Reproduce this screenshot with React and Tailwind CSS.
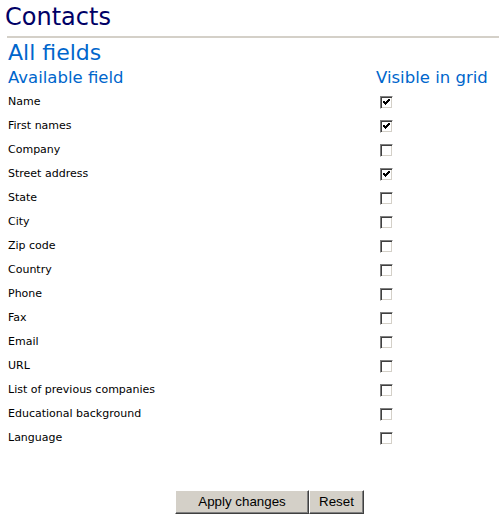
import React from "react";

const fields = [
  ["Name", true],
  ["First names", true],
  ["Company", false],
  ["Street address", true],
  ["State", false],
  ["City", false],
  ["Zip code", false],
  ["Country", false],
  ["Phone", false],
  ["Fax", false],
  ["Email", false],
  ["URL", false],
  ["List of previous companies", false],
  ["Educational background", false],
  ["Language", false],
];

function ClassicCheckbox({ checked }) {
  return (
    <span className="ml-[4px] flex h-[13px] w-[13px] items-center justify-center border border-t-[#808080] border-l-[#808080] border-r-white border-b-white bg-white shadow-[inset_1px_1px_#404040,inset_-1px_-1px_#d4d0c8]">
      {checked && (
        <svg width="9" height="9" viewBox="0 0 9 9">
          <polyline points="1.5,3.5 3.5,5.5 7.5,1.5" fill="none" stroke="#000" strokeWidth="2" shapeRendering="crispEdges" />
        </svg>
      )}
    </span>
  );
}

export default function App() {
  return (
    <div className="min-h-screen bg-white pl-2 font-['DejaVu_Sans',Verdana,sans-serif]">
      {/* Page title */}
      <div className="-ml-[3px] pt-[3px] text-[24px] leading-[28px] text-[#000066]">Contacts</div>
      <div className="-ml-px mt-[5px] h-[2px] bg-[#d4d0c8]" />

      <div className="mt-[2px] text-[22px] leading-[26px] text-[#0066cc]">All fields</div>

      {/* Field table */}
      <div className="mt-[2px] flex text-[16.5px] leading-[20px] text-[#0066cc]">
        <div className="w-[368px]">Available field</div>
        <div>Visible in grid</div>
      </div>
      <div className="mt-[2px]">
        {fields.map(([label, checked]) => (
          <div key={label} className="flex h-6 items-center text-[11px] text-black">
            <div className="w-[368px]">{label}</div>
            <ClassicCheckbox checked={checked} />
          </div>
        ))}
      </div>

      {/* Actions */}
      <div className="ml-[167px] mt-[40px] flex font-['Liberation_Sans',Arial,sans-serif] text-[13.33px] text-black">
        <button className="h-6 w-[134px] border border-t-white border-l-white border-r-[#404040] border-b-[#404040] bg-[#d4d0c8] shadow-[inset_-1px_-1px_#808080]">
          Apply changes
        </button>
        <button className="h-6 w-[55px] border border-t-white border-l-white border-r-[#404040] border-b-[#404040] bg-[#d4d0c8] shadow-[inset_-1px_-1px_#808080]">
          Reset
        </button>
      </div>
    </div>
  );
}
